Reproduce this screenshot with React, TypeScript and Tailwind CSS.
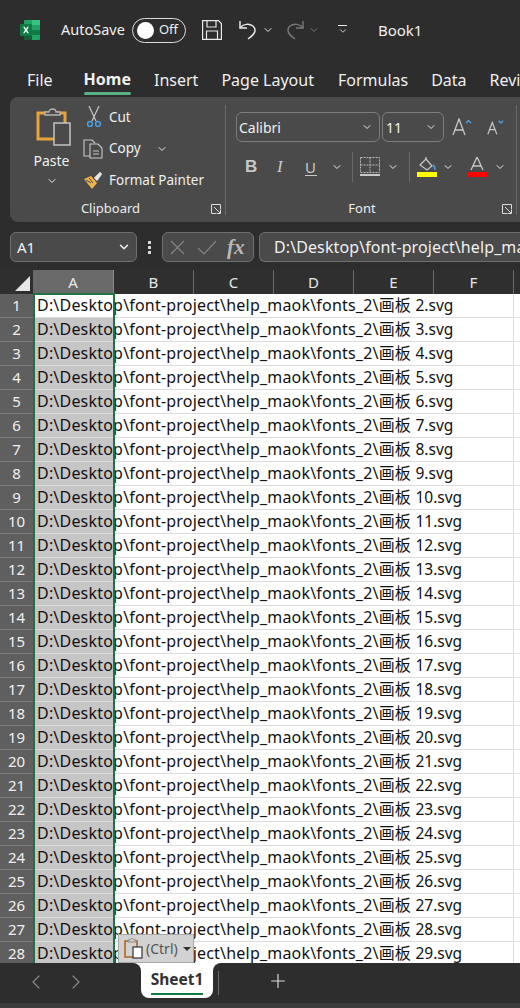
import React from 'react';
import { ChevronDown, ChevronLeft, ChevronRight, Plus } from 'lucide-react';

const rows = Array.from({ length: 28 }, (_, i) => i + 1);
const columns = ['B', 'C', 'D', 'E', 'F'];

const Chevron: React.FC<{ className?: string }> = ({ className }) => (
  <ChevronDown size={12} strokeWidth={2} className={className ?? 'text-[#e6e6e6]'} />
);

const ExcelLogo = () => (
  <svg width="20" height="20" viewBox="0 0 20 20" className="shrink-0">
    <rect x="4" y="0" width="16" height="20" rx="1" fill="#21a366" />
    <rect x="12" y="0" width="8" height="5" fill="#33c481" />
    <rect x="12" y="10" width="8" height="5" fill="#107c41" />
    <rect x="4" y="10" width="8" height="10" fill="#185c37" />
    <rect x="0" y="4" width="12" height="12" rx="1" fill="#0f7a41" />
    <path d="M3.2 6.8 5 10l-1.9 3.2h1.500L6 10.900l1.400 2.300h1.500L7 10l1.800-3.200H7.400L6 9.100 4.700 6.800z" fill="#fff" />
  </svg>
);

const SaveIcon = () => (
  <svg width="20" height="20" viewBox="0 0 20 20" fill="none" stroke="#e8e8e8" strokeWidth="1.200">
    <path d="M.6.6h15.800l3 3v15.800H.6z" />
    <path d="M5 1v6h9V1M4.500 19v-8h11v8" />
  </svg>
);

const UndoIcon = ({ color = '#e8e8e8' }: { color?: string }) => (
  <svg width="20" height="20" viewBox="0 0 20 20" fill="none" stroke={color} strokeWidth="1.500">
    <path d="M2 1v7h7" />
    <path d="M2 8c3-4 9-5 13-2 4 4 2 8-5 13" />
  </svg>
);

const PasteIcon = () => (
  <svg width="36" height="40" viewBox="0 0 36 40" fill="none">
    <path d="M5 6h24v26H2V6z" stroke="#e8a33d" strokeWidth="3" />
    <path d="M9 7V5h4c0-4 7-4 7 0h4v3H9z" fill="#4a4a4a" stroke="#b5b5b5" strokeWidth="1.300" />
    <rect x="18" y="16" width="16" height="22" fill="#4a4a4a" stroke="#c4c4c4" strokeWidth="1.500" />
  </svg>
);

const CutIcon = () => (
  <svg width="16" height="21" viewBox="0 0 16 21" fill="none">
    <path d="M3 0l7 15M13 0 6 15" stroke="#c8c8c8" strokeWidth="1.200" />
    <circle cx="4" cy="18" r="2.400" stroke="#4a9fe0" strokeWidth="1.500" />
    <circle cx="12" cy="18" r="2.400" stroke="#4a9fe0" strokeWidth="1.500" />
  </svg>
);

const CopyIcon = () => (
  <svg width="20" height="20" viewBox="0 0 20 20" fill="none" stroke="#c8c8c8" strokeWidth="1.100">
    <path d="M7 17H1V1h8l3 3" />
    <path d="M7 5h8l4 4v10H7z" />
    <path d="M10 12h6M10 15h6" />
  </svg>
);

const PainterIcon = () => (
  <svg width="20" height="19" viewBox="0 0 20 19" fill="none">
    <path d="M1 8l7-3 6 7-5 6z" fill="#f0b24a" />
    <path d="M3 9l5 3M6 7l4 5" stroke="#4a4a4a" strokeWidth="1" />
    <path d="M11 7l6-6 2 2-5 7" fill="#e8e8e8" stroke="#b8b8b8" strokeWidth="0.800" />
  </svg>
);

const LauncherIcon = () => (
  <svg width="10" height="10" viewBox="0 0 10 10" fill="none" stroke="#dcdcdc" strokeWidth="1">
    <path d="M9.500 5V.5H.5v9H5" />
    <path d="M3 3l6 6M9.500 5.500v4h-4" />
  </svg>
);

const GrowFontIcon = ({ up }: { up: boolean }) => (
  <svg width={up ? 20 : 18} height="18" viewBox="0 0 20 18" fill="none">
    <path d={up ? 'M1 17 7 1l6 16M3 12h8' : 'M2 17 7 4l5 13M4 12h6'} stroke="#c8c8c8" strokeWidth="1.300" />
    <path d={up ? 'M14 5l2.500-2.500L19 5' : 'M14 2l2.500 2.500L19 2'} stroke="#4a9fe0" strokeWidth="1.500" />
  </svg>
);

const BorderIcon = () => (
  <svg width="20" height="20" viewBox="0 0 20 20" fill="none">
    <path d="M.5.500h19v15H.5zM10 .5v15M.5 8h19" stroke="#b8b8b8" strokeWidth="1" strokeDasharray="2 1" />
    <rect x="0" y="17" width="20" height="2" fill="#c8c8c8" />
  </svg>
);

const FillIcon = () => (
  <svg width="20" height="20" viewBox="0 0 20 20" fill="none">
    <path d="M3 8l6-6 6 7-5 4z" stroke="#c8c8c8" strokeWidth="1.200" />
    <path d="M9 2V0" stroke="#c8c8c8" strokeWidth="1.200" />
    <path d="M16 8c2 1 2 3 2 5" stroke="#4a9fe0" strokeWidth="1.500" />
    <rect x="0" y="15" width="20" height="5" fill="#ffff00" />
  </svg>
);

const FontColorIcon = () => (
  <svg width="20" height="20" viewBox="0 0 20 20" fill="none">
    <path d="M4 13 10 0l6 13M6 9h8" stroke="#c8c8c8" strokeWidth="1.300" />
    <rect x="0" y="15" width="20" height="5" fill="#ff0000" />
  </svg>
);

const CancelIcon = () => (
  <svg width="15" height="15" viewBox="0 0 15 15" fill="none" stroke="#858585" strokeWidth="1.200">
    <path d="M1 1l13 13M14 1 1 14" />
  </svg>
);

const EnterIcon = () => (
  <svg width="20" height="15" viewBox="0 0 20 15" fill="none" stroke="#858585" strokeWidth="1.200">
    <path d="M1 8l6 6L19 1" />
  </svg>
);

const SmallPaste = () => (
  <svg width="19" height="21" viewBox="0 0 19 21" fill="none">
    <path d="M2 3h11v16H1V3z" stroke="#b5651d" strokeWidth="1.600" />
    <path d="M4 4V2h2c0-2 4-2 4 0h2v2z" fill="#d0d0d0" stroke="#777" strokeWidth="0.800" />
    <rect x="9" y="9" width="9" height="11" fill="#fff" stroke="#333" strokeWidth="1.200" />
  </svg>
);

const GroupLabel: React.FC<{ label: string; offset: string }> = ({ label, offset }) => (
  <div className={`relative h-[26px] flex items-center justify-center text-[13px] text-[#ececec] ${offset}`}>
    {label}
    <span className="absolute right-[4px] top-[8px]">
      <LauncherIcon />
    </span>
  </div>
);

const Toolbar = () => (
  <div className="h-[60px] flex items-center">
    <div className="ml-[20px]"><ExcelLogo /></div>
    <span className="ml-[21px] text-[14.500px] text-[#efefef]">AutoSave</span>
    <div className="ml-[7px] w-[54px] h-[25px] rounded-full border border-[#dcdcdc] flex items-center pl-[4px]">
      <span className="w-[17px] h-[17px] rounded-full bg-white" />
      <span className="ml-[5px] text-[13px] text-[#efefef]">Off</span>
    </div>
    <div className="ml-[16px]"><SaveIcon /></div>
    <div className="ml-[16px]"><UndoIcon /></div>
    <Chevron className="ml-[4px] text-[#e8e8e8]" />
    <div className="ml-[11px] -scale-x-100"><UndoIcon color="#777777" /></div>
    <Chevron className="ml-[3px] text-[#777777]" />
    <div className="ml-[18px] flex flex-col items-center w-[10px]">
      <span className="w-[9px] h-px bg-[#e8e8e8]" />
      <ChevronDown size={10} strokeWidth={2} className="text-[#e8e8e8]" />
    </div>
    <span className="ml-[30px] text-[15px] text-[#efefef]">Book1</span>
  </div>
);

const Tabs = () => (
  <div className="h-[37px] flex text-[16px] text-[#efefef] whitespace-nowrap overflow-hidden">
    <span className="ml-[27px] mt-[8px]">File</span>
    <div className="ml-[31px] mt-[8px] flex flex-col items-center">
      <span className="font-bold leading-[22px]">Home</span>
      <span className="mt-[2px] w-[47px] h-[3px] rounded-sm bg-[#58b184]" />
    </div>
    <span className="ml-[23px] mt-[8px]">Insert</span>
    <span className="ml-[23px] mt-[8px]">Page Layout</span>
    <span className="ml-[24px] mt-[8px]">Formulas</span>
    <span className="ml-[23px] mt-[8px]">Data</span>
    <span className="ml-[23px] mt-[8px]">Review</span>
  </div>
);

const Clipboard = () => (
  <div className="w-[215px] shrink-0 flex flex-col">
    <div className="flex h-[99px]">
      <div className="w-[72px] flex flex-col items-center pt-[10px] pl-[11px]">
        <div className="ml-[4px]"><PasteIcon /></div>
        <span className="mt-[3px] text-[14px] text-[#efefef]">Paste</span>
        <Chevron className="mt-[4px] text-[#e8e8e8]" />
      </div>
      <div className="flex flex-col text-[13.500px] text-[#efefef] pt-[4px] ml-[1px]">
        <div className="h-[32px] flex items-center">
          <span className="w-[26px] pl-[3px]"><CutIcon /></span>Cut
        </div>
        <div className="h-[32px] flex items-center">
          <span className="w-[26px]"><CopyIcon /></span>Copy
          <Chevron className="ml-[15px] text-[#e8e8e8]" />
        </div>
        <div className="h-[32px] flex items-center">
          <span className="w-[26px]"><PainterIcon /></span>Format Painter
        </div>
      </div>
    </div>
    <GroupLabel label="Clipboard" offset="pr-[14px]" />
  </div>
);

const Font = () => (
  <div className="w-[290px] shrink-0 flex flex-col">
    <div className="h-[99px] pl-[10px]">
      <div className="flex items-center pt-[15px] gap-[2px]">
        <div className="w-[144px] h-[30px] rounded-md border border-[#7c7c7c] flex items-center justify-between pl-[2px] pr-[6px] text-[14px] text-[#f0f0f0]">
          Calibri<Chevron />
        </div>
        <div className="w-[62px] h-[30px] rounded-md border border-[#7c7c7c] flex items-center justify-between pl-[3px] pr-[6px] text-[14px] text-[#f0f0f0]">
          11<Chevron />
        </div>
        <div className="ml-[6px]"><GrowFontIcon up /></div>
        <div className="ml-[12px]"><GrowFontIcon up={false} /></div>
      </div>
      <div className="flex items-center h-[30px] mt-[10px]">
        <span className="ml-[9px] w-[24px] text-[17px] font-bold text-[#c8c8c8] font-['Liberation_Sans',sans-serif]">B</span>
        <span className="ml-[8px] w-[22px] text-[17px] italic text-[#c8c8c8] font-['Liberation_Serif',serif]">I</span>
        <div className="ml-[6px] w-[24px] flex flex-col items-start">
          <span className="text-[15px] leading-[16px] text-[#c8c8c8]">U</span>
          <span className="w-[12px] h-px bg-[#c8c8c8]" />
        </div>
        <Chevron className="ml-[2px] text-[#e8e8e8]" />
        <span className="ml-[9px] w-px h-[30px] bg-[#6a6a6a]" />
        <div className="ml-[7px]"><BorderIcon /></div>
        <Chevron className="ml-[7px] text-[#e8e8e8]" />
        <span className="ml-[10px] w-px h-[30px] bg-[#6a6a6a]" />
        <div className="ml-[7px]"><FillIcon /></div>
        <Chevron className="ml-[5px] text-[#e8e8e8]" />
        <div className="ml-[13px]"><FontColorIcon /></div>
        <Chevron className="ml-[7px] text-[#e8e8e8]" />
      </div>
    </div>
    <GroupLabel label="Font" offset="pr-[18px]" />
  </div>
);

const Ribbon = () => (
  <div className="ml-[10px] h-[125px] rounded-l-lg bg-[#4a4a4a] flex items-stretch overflow-hidden">
    <Clipboard />
    <span className="self-center w-px h-[110px] bg-[#6a6a6a]" />
    <Font />
    <span className="self-center w-px h-[110px] bg-[#6a6a6a]" />
  </div>
);

const FormulaBar = () => (
  <div className="h-[48px] flex items-start pt-[10px] overflow-hidden">
    <div className="ml-[10px] w-[127px] h-[30px] shrink-0 rounded-md border border-[#6f6f6f] bg-[#4a4a4a] flex items-center justify-between pl-[6px] pr-[5px] text-[15px] text-[#f0f0f0]">
      A1<ChevronDown size={14} strokeWidth={2.500} className="text-[#f0f0f0]" />
    </div>
    <div className="ml-[10px] w-[4px] h-[30px] shrink-0 flex flex-col items-center justify-center gap-[2px]">
      <span className="w-[3px] h-[3px] bg-[#d8d8d8]" />
      <span className="w-[3px] h-[3px] bg-[#d8d8d8]" />
      <span className="w-[3px] h-[3px] bg-[#d8d8d8]" />
    </div>
    <div className="ml-[11px] w-[92px] h-[30px] shrink-0 rounded-md border border-[#6f6f6f] bg-[#4a4a4a] flex items-center pl-[7px]">
      <CancelIcon />
      <div className="ml-[12px]"><EnterIcon /></div>
      <span className="ml-[10px] text-[21px] leading-[24px] italic font-bold text-[#b8b8b8] font-['Liberation_Serif',serif]">fx</span>
    </div>
    <div className="ml-[5px] flex-1 h-[30px] rounded-l-md border border-r-0 border-[#6f6f6f] bg-[#4a4a4a] flex items-center pl-[14px] text-[16px] tracking-[0.1px] text-[#f0f0f0] whitespace-nowrap overflow-hidden">
      D:\Desktop\font-project\help_maok\fonts_2\画板 2.svg
    </div>
  </div>
);

const Sheet = () => (
  <div className="relative flex-1 overflow-hidden bg-white">
    <div className="h-[24px] flex bg-[#2f2f2f] text-[15px] text-[#e8e8e8]">
      <div className="w-[33px] shrink-0 flex items-end justify-end pr-[3px] pb-[3px]">
        <span className="w-0 h-0 border-l-[15px] border-b-[15px] border-l-transparent border-b-[#e6e6e6]" />
      </div>
      <div className="w-[81px] shrink-0 flex items-center justify-center bg-[#696969] border-r border-[#8a8a8a]">A</div>
      {columns.map((c) => (
        <div key={c} className="w-[80px] shrink-0 flex items-center justify-center border-r border-[#6a6a6a]">{c}</div>
      ))}
    </div>
    {rows.map((n) => (
      <div key={n} className="h-[24px] flex border-b border-[#dcdcdc]">
        <div className="w-[33px] shrink-0 bg-[#5f5f5f] border-b border-[#7a7a7a] -mb-px flex items-center justify-center text-[15px] text-[#f0f0f0]">
          {n}
        </div>
        <div className={`w-[80px] shrink-0 pl-[4px] flex items-center whitespace-nowrap text-[16px] tracking-[0.2px] text-[#111111] ${n === 1 ? 'bg-white' : 'bg-[#c6c6c6]'}`}>
          <span className="relative">
            D:\Desktop\font-project\help_maok\fonts_2\画板 <span className="text-[15.500px] tracking-normal">{n + 1}.svg</span>
          </span>
        </div>
        <div className="ml-[400px] w-px shrink-0 bg-[#dcdcdc]" />
      </div>
    ))}
    <div className="absolute left-[33px] top-[23px] bottom-0 w-[82px] border-x-2 border-t-2 border-[#1f7246]" />
    <div className="absolute left-[118px] bottom-0 h-[29px] w-[76px] bg-[#d2d2d2] border border-[#a8a8a8] flex items-center pl-[5px] text-[14px] text-[#555555]">
      <SmallPaste />
      <span className="ml-[3px]">(Ctrl)</span>
      <span className="ml-[5px] w-0 h-0 border-x-[4px] border-t-[4px] border-x-transparent border-t-[#333333]" />
    </div>
  </div>
);

const SheetTabs = () => (
  <div className="h-[40px] flex items-start bg-[#2d2d2d] shrink-0">
    <ChevronLeft size={24} strokeWidth={1.100} className="ml-[24px] mt-[7px] text-[#8c8c8c]" />
    <ChevronRight size={24} strokeWidth={1.100} className="ml-[16px] mt-[7px] text-[#8c8c8c]" />
    <div className="relative ml-[53px] w-[72px] h-[35px] rounded-b-lg bg-white flex flex-col items-center pt-[6px]">
      <span className="absolute -left-[8px] top-0 w-[8px] h-[8px] bg-white">
        <span className="block w-full h-full bg-[#2d2d2d] rounded-tr-[8px]" />
      </span>
      <span className="absolute -right-[8px] top-0 w-[8px] h-[8px] bg-white">
        <span className="block w-full h-full bg-[#2d2d2d] rounded-tl-[8px]" />
      </span>
      <span className="text-[15.500px] leading-[20px] font-bold text-[#333333]">Sheet1</span>
      <span className="mt-[4px] w-[52px] h-[2px] bg-[#107c41]" />
    </div>
    <span className="ml-[5px] mt-[8px] w-px h-[24px] bg-[#6a6a6a]" />
    <Plus size={22} strokeWidth={1.300} className="ml-[48px] mt-[7px] text-[#d8d8d8]" />
  </div>
);

export default function App() {
  return (
    <div className="w-[520px] h-[1008px] overflow-hidden flex flex-col bg-[#2d2d2d] font-['Noto_Sans','Noto_Sans_CJK_SC',sans-serif]">
      <Toolbar />
      <Tabs />
      <Ribbon />
      <FormulaBar />
      <Sheet />
      <SheetTabs />
      <div className="h-[5px] shrink-0 bg-[#3c3c3c]" />
    </div>
  );
}
